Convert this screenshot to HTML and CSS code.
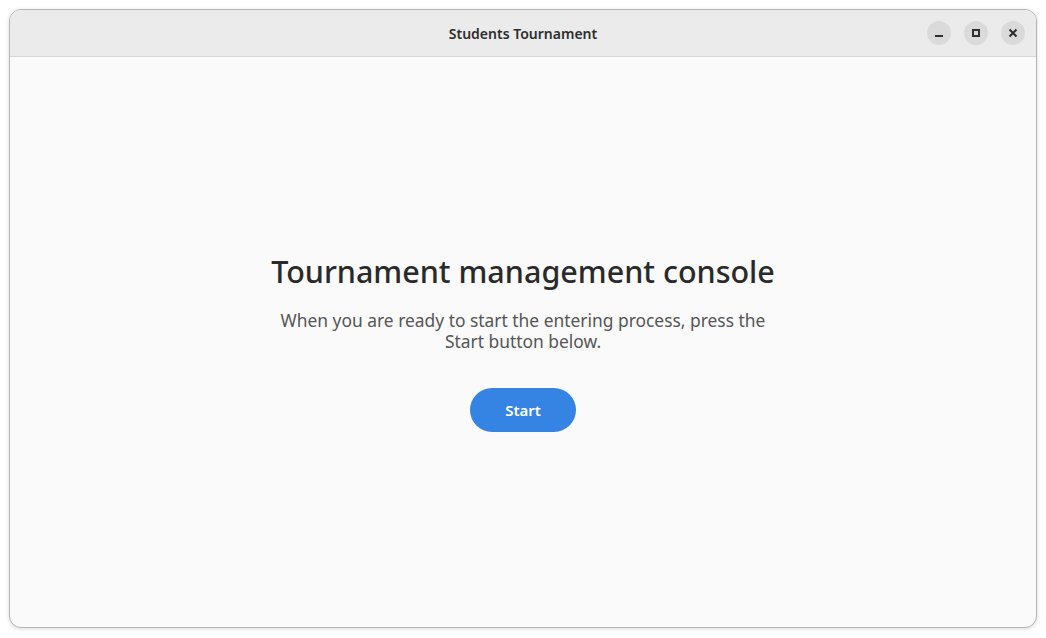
FILE: index.html
```html
<!DOCTYPE html>
<html>
<head>
<meta charset="utf-8">
<link rel="stylesheet" href="styles.css">
</head>
<body>
<div class="window">
  <header class="titlebar">
    <div class="title">Students Tournament</div>
    <div class="controls">
      <button class="ctl" aria-label="Minimize">
        <svg width="16" height="16" viewBox="0 0 16 16"><rect x="4" y="10" width="8" height="2" fill="#2e2e2e"/></svg>
      </button>
      <button class="ctl" aria-label="Maximize">
        <svg width="16" height="16" viewBox="0 0 16 16"><rect x="5" y="5" width="6" height="6" fill="none" stroke="#2e2e2e" stroke-width="2"/></svg>
      </button>
      <button class="ctl" aria-label="Close">
        <svg width="16" height="16" viewBox="0 0 16 16"><path d="M4.5 4.5 L11.5 11.5 M11.5 4.5 L4.5 11.5" stroke="#2e2e2e" stroke-width="2" fill="none"/></svg>
      </button>
    </div>
  </header>
  <main class="content">
    <h1 class="heading">Tournament management console</h1>
    <p class="desc">When you are ready to start the entering process, press the Start button below.</p>
    <button class="start">Start</button>
  </main>
</div>
</body>
</html>
```
FILE: styles.css
```css
html, body {
  margin: 0;
  padding: 0;
  background: #ffffff;
}
body {
  padding: 9px;
  height: 638px;
  box-sizing: border-box;
  font-family: "Noto Sans", "Open Sans", sans-serif;
}
.window {
  height: 619px;
  border: 1px solid #b4b4b4;
  border-radius: 12px;
  background: #fafafa;
  box-shadow: 0 1px 4px rgba(0,0,0,0.15);
  display: flex;
  flex-direction: column;
  overflow: hidden;
  box-sizing: border-box;
}
.titlebar {
  height: 47px;
  flex: none;
  background: #ebebeb;
  border-bottom: 1px solid #d6d6d6;
  box-sizing: border-box;
  display: flex;
  align-items: center;
  justify-content: center;
  position: relative;
}
.title {
  font-size: 14px;
  font-weight: 600;
  color: #2e2e2e;
}
.controls {
  position: absolute;
  right: 11px;
  top: 0;
  bottom: 0;
  display: flex;
  align-items: center;
  gap: 13px;
}
.ctl {
  width: 24px;
  height: 24px;
  border-radius: 50%;
  border: none;
  background: #dadada;
  padding: 0;
  display: flex;
  align-items: center;
  justify-content: center;
}
.content {
  flex: 1;
  display: flex;
  flex-direction: column;
  align-items: center;
  justify-content: center;
  padding-top: 1px;
}
.heading {
  margin: 0;
  font-size: 30.5px;
  font-weight: 500;
  color: #2a2a2a;
  line-height: 36px;
}
.desc {
  margin: 21px 0 0;
  width: 490px;
  text-align: center;
  font-size: 17.4px;
  line-height: 21px;
  color: #555555;
}
.start {
  margin-top: 36px;
  width: 106px;
  height: 44px;
  border: none;
  border-radius: 22px;
  background: #3584e4;
  color: #ffffff;
  font-family: inherit;
  font-size: 15px;
  font-weight: 600;
}
```
